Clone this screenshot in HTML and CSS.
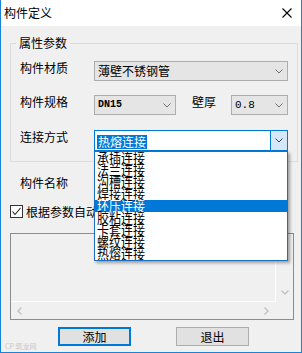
FILE: index.html
```html
<!DOCTYPE html>
<html>
<head>
<meta charset="UTF-8">
<title>构件定义</title>
<link rel="stylesheet" href="styles.css">
</head>
<body>

<div class="dlg">
	<div class="titlebar">
		<span class="title">构件定义</span>
		<svg class="close" width="10" height="10" viewBox="0 0 10 10"><path d="M0.5 0.5L9.5 9.5M9.5 0.5L0.5 9.5" stroke="#000" stroke-width="1.1" fill="none"/></svg>
	</div>

	<div class="content">
		<fieldset class="group">
			<legend>属性参数</legend>

			<div class="row first">
				<span class="lbl">构件材质</span>
				<div class="combo wide">
					<span class="val">薄壁不锈钢管</span>
					<span class="arrow"><svg width="8" height="5" viewBox="0 0 8 5"><polyline points="0.5,0.5 4,4 7.5,0.5" fill="none" stroke="#707070"/></svg></span>
				</div>
			</div>

			<div class="row">
				<span class="lbl">构件规格</span>
				<div class="combo small">
					<span class="val mono bold">DN15</span>
					<span class="arrow"><svg width="8" height="5" viewBox="0 0 8 5"><polyline points="0.5,0.5 4,4 7.5,0.5" fill="none" stroke="#707070"/></svg></span>
				</div>
				<span class="lbl2">壁厚</span>
				<div class="combo tiny">
					<span class="val mono">0.8</span>
					<span class="arrow"><svg width="8" height="5" viewBox="0 0 8 5"><polyline points="0.5,0.5 4,4 7.5,0.5" fill="none" stroke="#707070"/></svg></span>
				</div>
			</div>

			<div class="row">
				<span class="lbl">连接方式</span>
				<div class="combo wide active">
					<span class="val"><span class="sel">热熔连接</span></span>
					<span class="arrow"><svg width="8" height="5" viewBox="0 0 8 5"><polyline points="0.5,0.5 4,4 7.5,0.5" fill="none" stroke="#404040"/></svg></span>

					<ul class="droplist">
						<li><span>承插连接</span></li>
						<li><span>法兰连接</span></li>
						<li><span>沟槽连接</span></li>
						<li><span>焊接连接</span></li>
						<li class="hot"><span>环压连接</span></li>
						<li><span>胶粘连接</span></li>
						<li><span>卡套连接</span></li>
						<li><span>螺纹连接</span></li>
						<li><span>热熔连接</span></li>
					</ul>
				</div>
			</div>
		</fieldset>

		<div class="name-row">
			<span class="lbl">构件名称</span>
			<div class="edit"></div>
		</div>

		<div class="check-row">
			<span class="checkbox"><svg width="11" height="11" viewBox="0 0 11 11"><polyline points="1.5,5.5 4,8.5 9.5,2" fill="none" stroke="#222" stroke-width="1.1"/></svg></span>
			<span>根据参数自动生成名称</span>
		</div>

		<div class="listbox">
			<div class="list-area"></div>
			<div class="vscroll">
				<svg width="8" height="5" viewBox="0 0 8 5"><polyline points="0.5,0.5 4,4 7.5,0.5" fill="none" stroke="#c2c2c2" stroke-width="1.4"/></svg>
			</div>
			<div class="hscroll">
				<svg width="5" height="8" viewBox="0 0 5 8"><polyline points="4.5,0.5 1,4 4.5,7.5" fill="none" stroke="#c2c2c2" stroke-width="1.4"/></svg>
				<svg width="5" height="8" viewBox="0 0 5 8"><polyline points="0.5,0.5 4,4 0.5,7.5" fill="none" stroke="#c2c2c2" stroke-width="1.4"/></svg>
			</div>
			<div class="corner"></div>
		</div>

		<div class="buttons">
			<span class="mark">CP 筑龙网</span>
			<button type="button" class="btn default">添加</button>
			<button type="button" class="btn">退出</button>
		</div>
	</div>
</div>

</body>
</html>
```

FILE: styles.css
```css
body
{
	margin: 0;
	font-family: "Noto Sans CJK SC", "Microsoft YaHei", sans-serif;
	font-size: 12px;
	color: #000;
}

.dlg
{
	width: 302px;
	height: 353px;
	box-sizing: border-box;
	border: 1px solid #1883d7;
	border-top: 0;
	background-color: #f0f0f0;
}

.titlebar
{
	height: 26px;
	background-color: #fff;
	display: flex;
	align-items: center;
	justify-content: space-between;
	padding: 0 9px 0 3px;
}
.title { line-height: 14px; }
.close { display: block; }

.content
{
	padding: 10px 0 0 9px;
}

/* group box */
.group
{
	margin: 0;
	width: 288px;
	box-sizing: border-box;
	border: 1px solid #dcdcdc;
	padding: 0 0 10px 0;
	min-inline-size: 0;
}
.group legend
{
	margin-left: 5px;
	padding: 0 3px;
	line-height: 14px;
}

.row
{
	display: flex;
	align-items: flex-start;
	padding-left: 9px;
	margin-top: 14px;
}
.row.first { margin-top: 11px; }
.row:last-child { margin-top: 15px; }

.lbl
{
	width: 74px;
	line-height: 14px;
	flex: none;
}
.lbl2
{
	width: 39px;
	margin-left: 16px;
	line-height: 14px;
	flex: none;
}

/* combobox */
.combo
{
	position: relative;
	height: 20px;
	box-sizing: border-box;
	border: 1px solid #adadad;
	background-color: #e5e5e5;
	display: flex;
	align-items: center;
	flex: none;
}
.combo.wide { width: 194px; }
.combo.small { width: 82px; }
.combo.tiny { width: 57px; }

.combo .val
{
	flex: 1;
	padding-left: 3px;
	line-height: 18px;
	white-space: nowrap;
	overflow: hidden;
}
.mono
{
	font-family: "Liberation Mono", monospace;
	font-size: 11px;
}
.bold
{
	font-weight: bold;
	font-size: 10px;
}
.combo .arrow
{
	width: 17px;
	align-self: stretch;
	display: flex;
	align-items: center;
	justify-content: center;
}
.arrow svg { display: block; }

.combo.active
{
	height: 21px;
	border-color: #0078d7;
	background-color: #fff;
}
.combo.active .val { padding-left: 2px; }
.combo.active .arrow
{
	width: 16px;
	background-color: #d4e8f9;
	border-left: 1px solid #0078d7;
}
.sel
{
	display: inline-block;
	background-color: #0078d7;
	color: #fff;
	line-height: 14px;
	padding: 0 1px;
	vertical-align: middle;
}

/* open list */
.droplist
{
	position: absolute;
	z-index: 10;
	left: -1px;
	top: calc(100% + 1px);
	width: 194px;
	box-sizing: border-box;
	margin: 0;
	padding: 0;
	list-style: none;
	border: 1px solid #1a6fc4;
	background-color: #fff;
	box-shadow: 2px 2px 3px rgba(0, 0, 0, 0.35);
	overflow: hidden;
}
.droplist li
{
	height: 12px;
	line-height: 12px;
	padding-left: 2px;
	white-space: nowrap;
}
.droplist li span
{
	display: inline-block;
	transform: scaleY(1.1);
}
.droplist li.hot
{
	background-color: #0078d7;
	color: #fff;
}

/* name row */
.name-row
{
	display: flex;
	align-items: center;
	margin-top: 11px;
	padding-left: 10px;
}
.edit
{
	width: 194px;
	height: 20px;
	box-sizing: border-box;
	border: 1px solid #7a7a7a;
	background-color: #fff;
}

.check-row
{
	display: flex;
	align-items: center;
	margin-top: 12px;
	height: 13px;
	line-height: 14px;
}
.checkbox
{
	width: 13px;
	height: 13px;
	box-sizing: border-box;
	border: 1px solid #333;
	background-color: #fff;
	margin-right: 3px;
	display: flex;
	align-items: center;
	justify-content: center;
}
.checkbox svg { display: block; }

/* list box */
.listbox
{
	margin-top: 15px;
	width: 284px;
	height: 87px;
	box-sizing: border-box;
	border: 1px solid #8c8c8c;
	display: grid;
	grid-template-columns: 1fr 17px;
	grid-template-rows: 1fr 17px;
}
.list-area
{
	border-right: 1px solid #fff;
	border-bottom: 1px solid #fff;
}
.vscroll
{
	display: flex;
	flex-direction: column;
	justify-content: flex-end;
	align-items: center;
	padding-bottom: 7px;
}
.hscroll
{
	display: flex;
	align-items: center;
	justify-content: space-between;
	padding: 0 7px 0 6px;
}
.vscroll svg, .hscroll svg { display: block; }

/* buttons */
.buttons
{
	display: flex;
	align-items: flex-start;
	margin-top: 7px;
}
.mark
{
	width: 53px;
	margin-left: -5px;
	margin-top: 15px;
	font-size: 7px;
	line-height: 8px;
	color: #c9c9c9;
	white-space: nowrap;
}
.btn
{
	width: 73px;
	height: 19px;
	box-sizing: border-box;
	border: 1px solid #adadad;
	background-color: #e1e1e1;
	font-family: "Noto Sans CJK SC", sans-serif;
	font-size: 12px;
	line-height: 15px;
	padding: 0;
	margin: 0 45px 0 0;
	color: #000;
}
.btn.default
{
	border: 2px solid #0078d7;
}
```
